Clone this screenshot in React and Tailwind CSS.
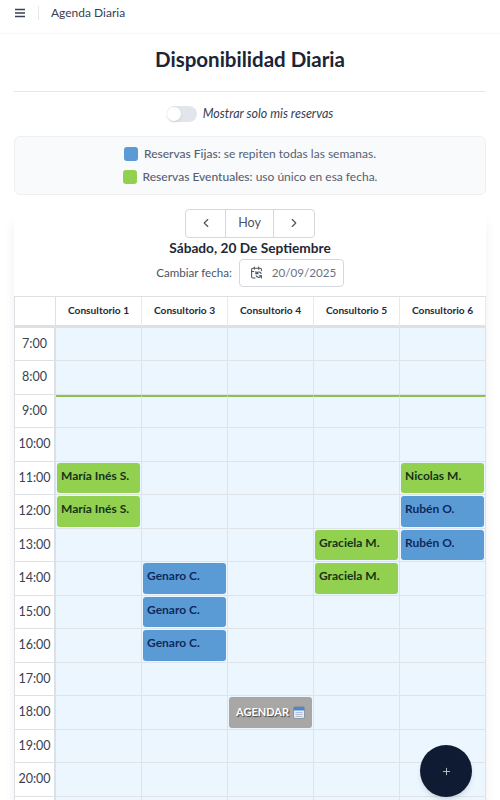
import React from 'react';
import { ChevronLeft, ChevronRight, CalendarSync, Plus } from 'lucide-react';

const rooms = ['Consultorio 1', 'Consultorio 3', 'Consultorio 4', 'Consultorio 5', 'Consultorio 6'];
const hours = [7, 8, 9, 10, 11, 12, 13, 14, 15, 16, 17, 18, 19, 20, 21];

const bookings = {
  '0-11': { name: 'María Inés S.', type: 'green' },
  '0-12': { name: 'María Inés S.', type: 'green' },
  '1-14': { name: 'Genaro C.', type: 'blue' },
  '1-15': { name: 'Genaro C.', type: 'blue' },
  '1-16': { name: 'Genaro C.', type: 'blue' },
  '3-13': { name: 'Graciela M.', type: 'green' },
  '3-14': { name: 'Graciela M.', type: 'green' },
  '4-11': { name: 'Nicolas M.', type: 'green' },
  '4-12': { name: 'Rubén O.', type: 'blue' },
  '4-13': { name: 'Rubén O.', type: 'blue' },
};

function CalendarEmoji() {
  return (
    <svg width="12" height="13" viewBox="0 0 12 13" className="ml-[4px] shrink-0">
      <rect x="0.5" y="1" width="11" height="11.5" rx="1.5" fill="#e8edf5" stroke="#5b6472" strokeWidth="0.5" />
      <rect x="0.5" y="1" width="11" height="3.5" rx="1" fill="#4a86d8" />
      <path d="M2.5 6.5h7M2.5 8.5h7M2.5 10.5h7" stroke="#a3b2c9" strokeWidth="0.8" />
    </svg>
  );
}

function Booking({ booking }) {
  const color =
    booking.type === 'green' ? 'bg-[#92d050] text-[#16331a]' : 'bg-[#5b9bd5] text-[#10295c]';
  return (
    <div className={`h-full rounded-[3px] pl-[4px] pt-[5px] text-[12px] font-bold leading-[16px] ${color}`}>
      {booking.name}
    </div>
  );
}

function Cell({ room, hour }) {
  const booking = bookings[`${room}-${hour}`];
  const isAgendar = room === 2 && hour === 18;
  // la fila de las 9 lleva la linea verde arriba
  const topLine = hour === 9 ? 'border-t-2 border-t-[#8cc152]' : '';
  return (
    <div className={`h-[33.5px] border-r border-b border-[#dfe3e8] bg-[#ebf6ff] p-px ${topLine}`}>
      {booking && <Booking booking={booking} />}
      {isAgendar && (
        <div className="flex h-full items-center rounded-[3px] bg-[#a9a7a5] pl-[7px] text-[11px] font-bold text-white [text-shadow:1px_1px_1px_#444]">
          AGENDAR
          <CalendarEmoji />
        </div>
      )}
    </div>
  );
}

export default function App() {
  return (
    <div className="relative h-[800px] overflow-hidden bg-white text-[#1f2937] [font-family:Lato,sans-serif]">
      <header className="flex h-[34px] items-start border-b border-[#f6f7f8] pl-[14px] pt-[6px]">
        <svg width="12" height="14" viewBox="0 0 12 14" className="shrink-0">
          <path d="M1 3.5h10M1 7h10M1 10.5h10" stroke="#374151" strokeWidth="1.5" />
        </svg>
        <div className="ml-[12px] h-[14px] w-px bg-[#e5e7eb]" />
        <span className="ml-[12px] text-[12px] leading-[14px] text-[#374151]">Agenda Diaria</span>
      </header>

      <main className="px-[14px] pt-[12px]">
        <h1 className="text-center text-[20.5px] font-bold leading-[26px] text-[#1a2535]">
          Disponibilidad Diaria
        </h1>
        <div className="mt-[19px] border-t border-[#e5e7eb]" />

        <div className="mt-[13px] flex items-center justify-center gap-[6px]">
          <div className="flex h-[16px] w-[30px] items-center rounded-full bg-[#e2e6ec]">
            <div className="h-[14px] w-[14px] rounded-full bg-white shadow-sm" />
          </div>
          <span className="text-[12.5px] italic text-[#374151]">Mostrar solo mis reservas</span>
        </div>

        <section className="mt-[12px] flex h-[59px] flex-col items-center justify-center gap-[7px] rounded-md border border-[#edf0f3] bg-[#f8fafc] text-[12px] leading-[16px] text-[#566070]">
          <div className="flex items-center gap-[6px]">
            <span className="h-[14px] w-[14px] rounded-[3px] bg-[#5b9bd5]" />
            <span><span className="font-medium">Reservas Fijas:</span> se repiten todas las semanas.</span>
          </div>
          <div className="flex items-center gap-[6px]">
            <span className="h-[14px] w-[14px] rounded-[3px] bg-[#92d050]" />
            <span><span className="font-medium">Reservas Eventuales:</span> uso único en esa fecha.</span>
          </div>
        </section>

        <section className="mt-[14px] bg-white shadow-[0_14px_12px_rgba(0,0,0,0.06)]">
          <div className="flex flex-col items-center">
            <div className="flex h-[29px] w-[130px] rounded-[4px] border border-[#d5d9de] text-[#4b5563]">
              <button className="flex w-[40px] items-center justify-center border-r border-[#d5d9de]">
                <ChevronLeft className="h-[14px] w-[14px]" strokeWidth={2} />
              </button>
              <button className="flex-1 border-r border-[#d5d9de] text-[12.5px]">Hoy</button>
              <button className="flex w-[40px] items-center justify-center">
                <ChevronRight className="h-[14px] w-[14px]" strokeWidth={2} />
              </button>
            </div>
            <div className="mt-[1px] text-[13.7px] font-bold leading-[18px] text-[#1f2937]">
              Sábado, 20 De Septiembre
            </div>
            <div className="mt-[2px] flex items-center gap-[7px]">
              <span className="text-[11.6px] text-[#4b5563]">Cambiar fecha:</span>
              <div className="flex h-[28px] w-[105px] items-center gap-[9px] rounded-[4px] border border-[#d5d9de] pl-[10px] text-[11.6px] text-[#6b7280]">
                <CalendarSync className="h-[13px] w-[13px] text-[#4b5563]" />
                20/09/2025
              </div>
            </div>
          </div>

          <div className="mt-[9px] grid grid-cols-[41px_repeat(5,1fr)] border-l border-t border-[#dde1e6]">
            <div className="h-[31px] border-r border-b-[3px] border-[#dde1e6]" />
            {rooms.map((room) => (
              <div
                key={room}
                className="flex h-[31px] items-center justify-center border-r border-b-[3px] border-[#dde1e6] border-r-[#e8eaed] text-[10.2px] font-bold text-[#1f2937]"
              >
                {room}
              </div>
            ))}
            {hours.map((hour) => (
              <React.Fragment key={hour}>
                <div className="flex h-[33.5px] items-center justify-center border-r-2 border-b border-[#dde1e6] text-[12.5px] text-[#374151]">
                  {hour < 21 && `${hour}:00`}
                </div>
                {rooms.map((room, i) => (
                  <Cell key={room} room={i} hour={hour} />
                ))}
              </React.Fragment>
            ))}
          </div>
        </section>
      </main>

      <button className="absolute left-[420px] top-[745px] flex h-[52px] w-[52px] items-center justify-center rounded-full bg-[#0f1b33] text-[#d7dbe2] shadow-md">
        <Plus className="h-[11px] w-[11px]" strokeWidth={1.75} />
      </button>
    </div>
  );
}
